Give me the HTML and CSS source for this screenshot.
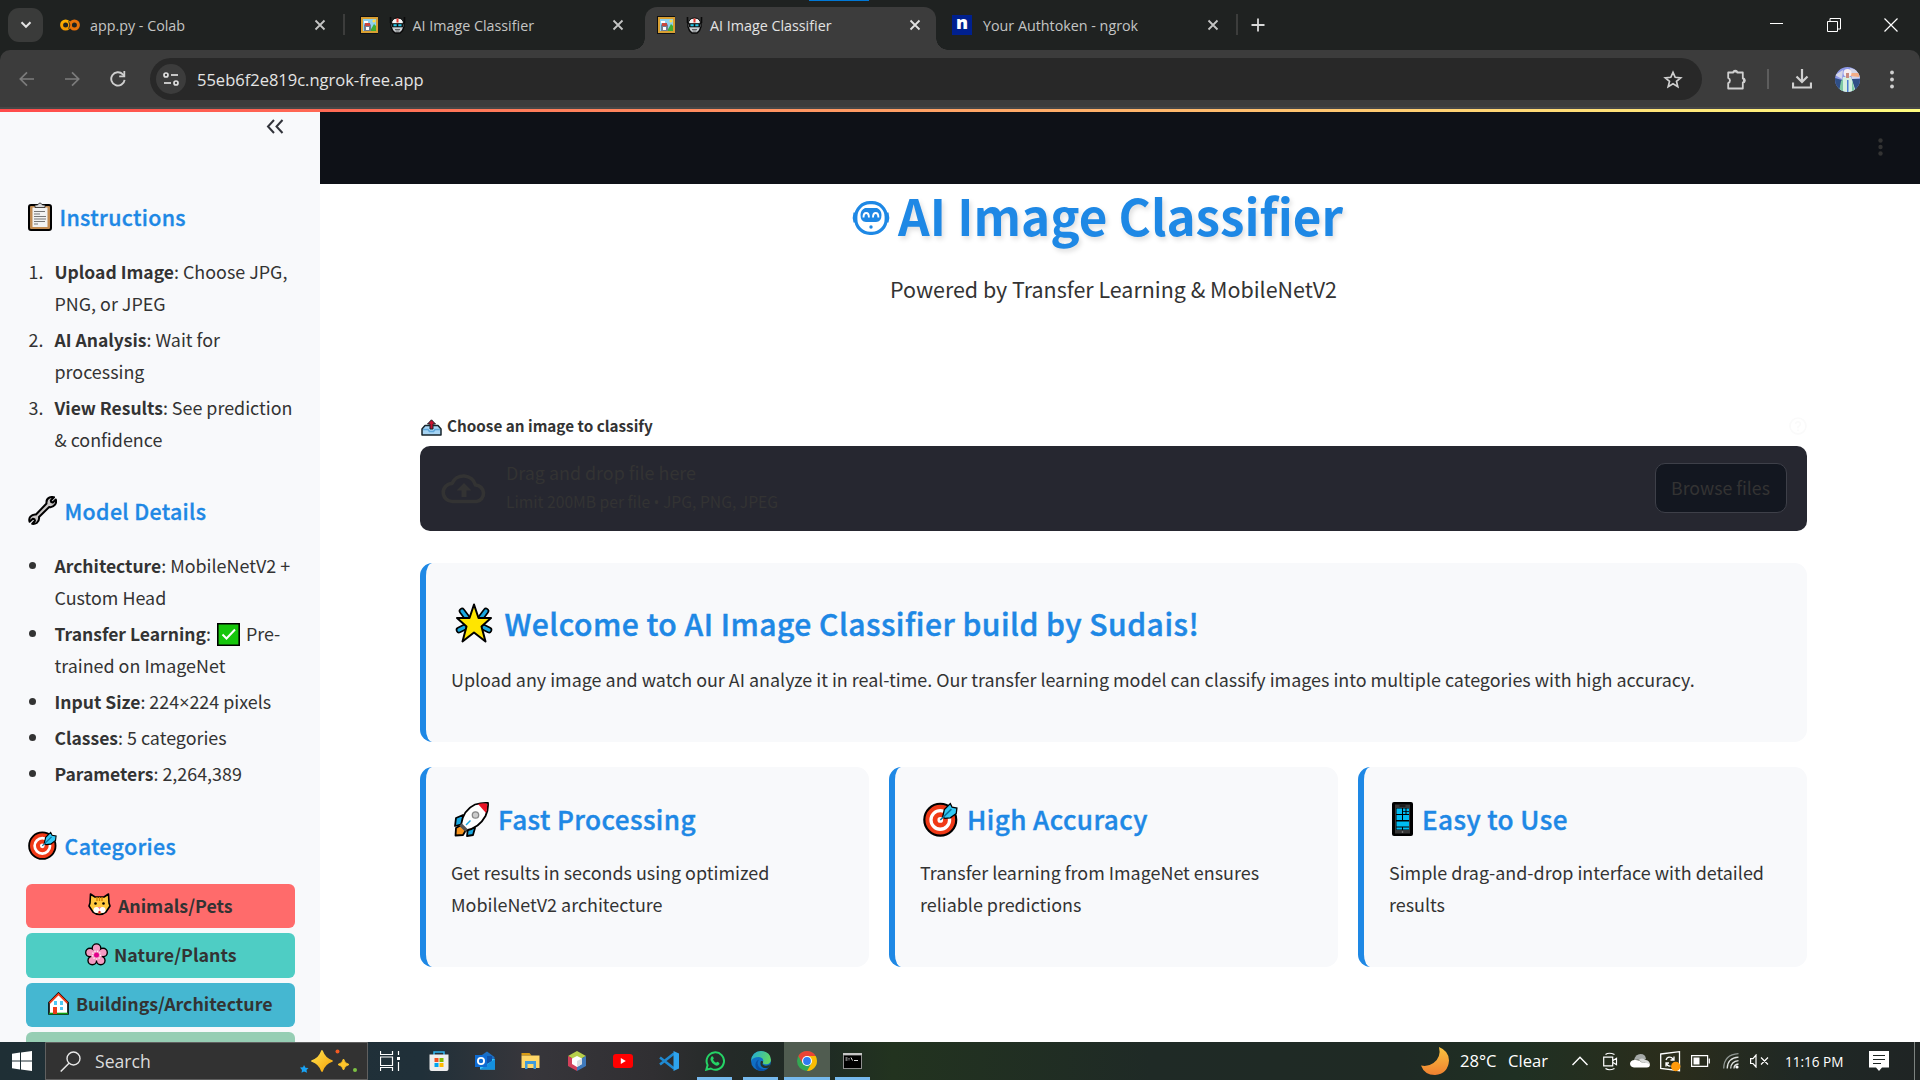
FILE: index.html
```html
<!DOCTYPE html>
<html lang="en">
<head>
<meta charset="utf-8">
<title>AI Image Classifier</title>
<link rel="stylesheet" href="styles.css">
</head>
<body>
<svg class="defs" width="0" height="0" aria-hidden="true">
  <defs>
    <linearGradient id="moonFill" x1="0" y1="0" x2="0" y2="1"><stop offset="0" stop-color="#f9c440"/><stop offset="1" stop-color="#f08030"/></linearGradient>
    <linearGradient id="sparkFill" x1="0" y1="0" x2="1" y2="1"><stop offset="0" stop-color="#ffe14d"/><stop offset="1" stop-color="#f5a30a"/></linearGradient>
    <linearGradient id="edgeTop" x1="0" y1="0" x2="1" y2="0.3"><stop offset="0" stop-color="#1fa8dc"/><stop offset="1" stop-color="#5fd668"/></linearGradient>
    <linearGradient id="colabA" x1="0" y1="0" x2="0" y2="1"><stop offset="0" stop-color="#ffb300"/><stop offset="1" stop-color="#f29900"/></linearGradient>
  </defs>
  <symbol id="close" viewBox="0 0 12 12"><path d="M1.500 1.500l9 9M10.500 1.500l-9 9" stroke="currentColor" stroke-width="1.800" fill="none"/></symbol>
  <symbol id="picture" viewBox="0 0 18 18">
    <path fill="#111" d="M0 0h18v18H0z"/><path fill="#d9a032" d="M1 1h17v16H1z"/><path fill="#8fd0ee" d="M3 3h13v12H3z"/>
    <path fill="#fff" d="M4 5h4v2H4z"/><circle cx="14" cy="5" r="1.600" fill="#ffe04a"/><path fill="#3fae35" d="M10 15l4-7 2 2v5z"/>
    <path fill="#6f7f94" d="M4 15V8l2 2h3l2-2v7z"/><path fill="#c8473f" d="M5 7h5v3H5z"/><path fill="#fff" d="M6 11h3v3H6z"/>
  </symbol>
  <symbol id="robot" viewBox="0 0 17 17">
    <path d="M1.500 0v6M15.500 0v6" stroke="#0a0a0a" stroke-width="1.600"/>
    <path d="M2 6v3.500l1.500 4L6 16h5l2.500-2.500 1.500-4V6z" fill="#c9ced2" stroke="#0a0a0a" stroke-width="1.400"/>
    <path d="M2.500 7q0-6 6-6t6 6z" fill="#f1f3f4" stroke="#0a0a0a"/><path d="M7.500 1.500h2v4h-2z" fill="#e5342b"/><path d="M3 6.300h11v4H3z" fill="#111"/>
    <path d="M4.500 7.300h3.200v2H4.500zM9.300 7.300h3.200v2H9.300z" fill="#28c7e8"/><path d="M6 12.500h5M6.500 14h4" stroke="#555" stroke-width=".9"/>
  </symbol>
  <symbol id="target" viewBox="0 0 32 32">
    <circle cx="15.800" cy="16.200" r="14.600" fill="#f03a17" stroke="#000" stroke-width="2"/>
    <circle cx="15.800" cy="16.400" r="8.500" fill="none" stroke="#fff" stroke-width="3"/>
    <circle cx="15.800" cy="16.400" r="2.600" fill="#fff"/>
    <path d="M18 13.500L19.500 7 25 1.500l1.600 3.300L31 5.500l-.6 5L25 14.500l-5 .5z" fill="#31c9f5" stroke="#000" stroke-width="1.200"/>
    <path d="M15.800 16.400L26 6.500" stroke="#0b6f9c" stroke-width="1.400"/>
  </symbol>
</svg>

<div class="window">
  <header class="tabstrip">
    <button class="tab-search"><svg width="12" height="8" viewBox="0 0 12 8"><path d="M1.500 1.200L6 5.800l4.500-4.600" fill="none" stroke="#e3e3e3" stroke-width="2"/></svg></button>
    <div class="tab">
      <svg class="favicon" width="20" height="20" viewBox="0 0 20 20"><circle cx="5.600" cy="10" r="4" fill="none" stroke="url(#colabA)" stroke-width="3"/><circle cx="14.400" cy="10" r="4" fill="none" stroke="#e8710a" stroke-width="3"/><path d="M8.600 6.200q2.600 3.800 0 7.600" fill="none" stroke="#1f2221" stroke-width=".8"/></svg>
      <span class="tab-title">app.py - Colab</span>
      <svg class="tab-close" width="12" height="12"><use href="#close"/></svg>
    </div>
    <div class="tab ruled">
      <svg class="favicon" width="18" height="18"><use href="#picture"/></svg>
      <svg class="tab-robot" width="17" height="17"><use href="#robot"/></svg>
      <span class="tab-title">AI Image Classifier</span>
      <svg class="tab-close" width="12" height="12"><use href="#close"/></svg>
    </div>
    <div class="tab active">
      <svg class="favicon" width="18" height="18"><use href="#picture"/></svg>
      <svg class="tab-robot" width="17" height="17"><use href="#robot"/></svg>
      <span class="tab-title">AI Image Classifier</span>
      <svg class="tab-close" width="12" height="12"><use href="#close"/></svg>
      <i class="load-mark"></i>
    </div>
    <div class="tab last">
      <span class="ngrok">n</span>
      <span class="tab-title">Your Authtoken - ngrok</span>
      <svg class="tab-close" width="12" height="12"><use href="#close"/></svg>
    </div>
    <svg class="new-tab" width="14" height="14" viewBox="0 0 14 14"><path d="M7 .5v13M.5 7h13" stroke="#d8d8d8" stroke-width="1.800"/></svg>
    <div class="win-controls">
      <svg width="14" height="14" viewBox="0 0 14 14"><path d="M0 5.500h13" stroke="#fff"/></svg>
      <svg width="14" height="14" viewBox="0 0 14 14"><path d="M.5 3.500h10v10H.5zM3 3V.5h10.500V11H11" fill="none" stroke="#fff"/></svg>
      <svg width="14" height="14" viewBox="0 0 14 14"><path d="M.5 .5l13 13M13.500 .5l-13 13" stroke="#fff" stroke-width="1.200"/></svg>
    </div>
  </header>

  <nav class="toolbar-wrap">
    <div class="toolbar">
      <svg width="16" height="16" viewBox="0 0 16 16"><path d="M15 8H1.500M8 1.300L1.300 8 8 14.700" fill="none" stroke="#7c7c7c" stroke-width="1.700"/></svg>
      <svg width="16" height="16" viewBox="0 0 16 16"><path d="M1 8h13.500M8 1.300L14.700 8 8 14.700" fill="none" stroke="#7c7c7c" stroke-width="1.700"/></svg>
      <svg width="16" height="16" viewBox="0 0 16 16"><path d="M14.600 8.800A6.700 6.700 0 1 1 12.800 3.300L14.500 5.200" fill="none" stroke="#cfcfcf" stroke-width="1.900"/><path d="M15.200 0v6.200H9.200V4.500h4.200V0z" fill="#cfcfcf"/></svg>
      <div class="omnibox">
        <span class="site-info"><svg width="16" height="14" viewBox="0 0 16 14"><g fill="none" stroke="#dedede" stroke-width="1.700"><circle cx="3" cy="3" r="2"/><path d="M8 3h7"/><circle cx="13" cy="11" r="2"/><path d="M1 11h7"/></g></svg></span>
        <span class="url">55eb6f2e819c.ngrok-free.app</span>
        <svg width="20" height="19" viewBox="0 0 20 19"><path d="M10 2.300l2.200 5 5.500.5-4.200 3.600 1.300 5.300-4.800-2.900-4.800 2.900 1.300-5.300L2.300 7.800l5.500-.5z" fill="none" stroke="#d0d0d0" stroke-width="1.700"/></svg>
      </div>
      <svg class="ext" width="21" height="21" viewBox="0 0 21 21"><path d="M2.200 3.500h5a2 1.900 0 0 1 4 0h5.600v6a1.900 2 0 0 1 0 4V19.500H2.200v-5.300a2.800 2.800 0 0 0 0-5.200z" fill="none" stroke="#d0d0d0" stroke-width="1.800" stroke-linejoin="round"/><path d="M7.500 3.500V2.500q1.800-1.600 3.500 0v1zM17 9.500q2.500 0 2.500 2t-2.500 2z" fill="#d0d0d0"/></svg>
      <i class="bar-rule"></i>
      <svg class="download" width="20" height="20" viewBox="0 0 20 20"><path d="M10 0v12.500M4.500 7.500l5.500 5.500 5.500-5.500M1 13.500v5h18v-5" fill="none" stroke="#d0d0d0" stroke-width="2.200"/></svg>
      <svg class="avatar" width="25" height="25" viewBox="0 0 25 25"><clipPath id="av"><circle cx="12.500" cy="12.500" r="12.500"/></clipPath><g clip-path="url(#av)"><path fill="#8d98e8" d="M0 0h25v25H0z"/><path fill="#d3d5e8" d="M15 1l10 3v7l-8 1zM0 8l8-5-1 9z"/><path fill="#2f4f86" d="M0 11l7 2 2 12H0zM17 12l8 0v10l-6 3z"/><path fill="#f3ac86" d="M15 6l10 0-1 4-9-1z"/><path fill="#d5efe0" d="M8 10l8 0 5 15H4z"/><path fill="#7cc8a3" d="M6 14l2-2 0 13H4zM17 13l3 12h-3z"/><circle cx="12.500" cy="6" r="4" fill="#f6eef2"/><path fill="#c88b80" d="M11 6h3v5h-3z"/><path fill="#4a7bd0" d="M12 13h1.500v12H12z"/></g></svg>
      <svg class="menu" width="6" height="19" viewBox="0 0 6 19"><g fill="#d0d0d0"><circle cx="3" cy="2.500" r="1.900"/><circle cx="3" cy="9.500" r="1.900"/><circle cx="3" cy="16.500" r="1.900"/></g></svg>
    </div>
  </nav>

  <div class="accent-line"></div>

  <div class="page">
    <aside class="sidebar">
      <div class="sidebar-head"><svg width="18" height="15" viewBox="0 0 18 15"><path d="M8 1L2 7.500 8 14M16.500 1l-6 6.500 6 6.500" fill="none" stroke="#31333a" stroke-width="2"/></svg></div>
      <section class="block">
        <h3>
          <svg width="24" height="29" viewBox="0 0 24 29"><rect x="1" y="3" width="22" height="25" rx="2" fill="#c18b52" stroke="#000" stroke-width="2"/><path fill="#f2f2f2" d="M4.500 5.500h15V25h-15z"/><path fill="#d9d9d9" stroke="#222" stroke-width=".8" d="M7 5.500V3h2.500q2.500-4 5 0H17v2.500z"/><path d="M6 9.500h11M6 12h6M6 14.500h12M6 17h12M6 19.500h11M6 22h4" stroke="#777" stroke-width="1.100"/></svg>
          <span>Instructions</span>
        </h3>
        <ol>
          <li><b>Upload Image</b>: Choose JPG,<br>PNG, or JPEG</li>
          <li><b>AI Analysis</b>: Wait for<br>processing</li>
          <li><b>View Results</b>: See prediction<br>&amp; confidence</li>
        </ol>
      </section>
      <section class="block">
        <h3>
          <svg width="29" height="29" viewBox="0 0 29 29"><path d="M18.500 7.500Q18 3 21.500 1.500q2.500-1 4.500-.2L22.800 4.500l.4 1.500 1.600.5 3-3q1 2.500-.8 5.200-2.300 3-5.800 2.300L11 21q.6 3.800-2.300 6-2.300 1.300-4.500.8L7 24.800l-.5-1.500-1.700-.5-3.200 3q-1-3 .8-5.200Q4.600 18 8 18.500z" fill="#c9c6c5" stroke="#000" stroke-width="2" stroke-linejoin="round"/></svg>
          <span>Model Details</span>
        </h3>
        <ul>
          <li><b>Architecture</b>: MobileNetV2 +<br>Custom Head</li>
          <li><b>Transfer Learning</b>: <svg class="check" width="23" height="23" viewBox="0 0 23 23"><path fill="#16c60c" stroke="#000" stroke-width="1.600" d="M.8 .8h21.400v21.400H.8z"/><path d="M5.500 11.500l4 4 8.500-9" fill="none" stroke="#fff" stroke-width="2"/></svg> Pre-<br>trained on ImageNet</li>
          <li><b>Input Size</b>: 224<span class="sym">×</span>224 pixels</li>
          <li><b>Classes</b>: 5 categories</li>
          <li><b>Parameters</b>: 2,264,389</li>
        </ul>
      </section>
      <section class="block">
        <h3><svg width="29" height="29"><use href="#target"/></svg><span>Categories</span></h3>
        <div class="pill animals">
          <svg width="23" height="23" viewBox="0 0 23 23"><path d="M2.500 1L7 4h9l4.500-3 .5 9 1 3-4 6q-6.500 5-13 0l-4-6 1-3z" fill="#ffc83d" stroke="#000" stroke-width="1.600" stroke-linejoin="round"/><path d="M9 4v4M11.500 4v4M14 4v4" stroke="#d67d00" stroke-width="1.300"/><circle cx="8.500" cy="17" r="3" fill="#fff"/><circle cx="14.500" cy="17" r="3" fill="#fff"/><circle cx="7.500" cy="10.500" r="1.300"/><circle cx="15.500" cy="10.500" r="1.300"/><path d="M10 14h3l-1.500 2z" fill="#f7a"/><path d="M10.500 18h2v2.500h-2z" fill="#e81224"/></svg>
          Animals/Pets
        </div>
        <div class="pill nature">
          <svg width="23" height="23" viewBox="0 0 23 23"><g fill="#f59bc4" stroke="#000" stroke-width="2.600"><circle cx="11.500" cy="5.200" r="3.700"/><circle cx="18" cy="9.500" r="3.700"/><circle cx="15.700" cy="17.500" r="3.700"/><circle cx="7.300" cy="17.500" r="3.700"/><circle cx="5" cy="9.500" r="3.700"/></g><g fill="#f59bc4"><circle cx="11.500" cy="5.200" r="3.600"/><circle cx="18" cy="9.500" r="3.600"/><circle cx="15.700" cy="17.500" r="3.600"/><circle cx="7.300" cy="17.500" r="3.600"/><circle cx="5" cy="9.500" r="3.600"/><circle cx="11.500" cy="12" r="5.500"/></g><circle cx="11.500" cy="12" r="4" fill="none" stroke="#fff" stroke-dasharray="1.200 1.500" stroke-width="1.200"/><circle cx="11.500" cy="12" r="2.500" fill="#e3008c"/></svg>
          Nature/Plants
        </div>
        <div class="pill buildings">
          <svg width="21" height="23" viewBox="0 0 21 23"><path d="M1 22V10.500L10.500 1 20 10.500V22z" fill="#fff" stroke="#000" stroke-width="1.600"/><path d="M1.500 11L10.500 2l9 9" fill="none" stroke="#f03a17" stroke-width="1.800"/><path d="M1 21.500h19" stroke="#13a10e" stroke-width="1.600"/><path fill="#f03a17" d="M5 15h4v7H5z"/><path fill="#50c8f5" d="M6 9h3v4H6zM12 9h3v4h-3zM12 15h3v3h-3z"/></svg>
          Buildings/Architecture
        </div>
        <div class="pill more"></div>
      </section>
    </aside>

    <main class="main">
      <div class="app-header"><svg width="5" height="18" viewBox="0 0 5 18"><g fill="#333"><circle cx="2.500" cy="2.500" r="2.200"/><circle cx="2.500" cy="9" r="2.200"/><circle cx="2.500" cy="15.500" r="2.200"/></g></svg></div>
      <div class="content">
        <h1>
          <svg width="38" height="34" viewBox="0 0 38 34"><rect x="3.800" y="1.700" width="30.400" height="30.600" rx="14" fill="none" stroke="#1e88e5" stroke-width="3.200"/><path fill="#1e88e5" d="M1.500 11.500h2.500v10H1.500q-1.500-5 0-10zM36.500 11.500H34v10h2.500q1.500-5 0-10zM13 7h12q4.500 2 4.500 7 0 7-5.500 7H14q-5.500 0-5.500-7 0-5 4.500-7z"/><path d="M11.500 16.500q0-4.500 2.700-4.500t2.700 4.500M21 16.500q0-4.500 2.700-4.500t2.700 4.500" fill="none" stroke="#fff" stroke-width="1.900"/><circle cx="19" cy="26" r="1.700" fill="#1e88e5"/></svg>
          <span>AI Image Classifier</span>
        </h1>
        <p class="subtitle">Powered by Transfer Learning &amp; MobileNetV2</p>
        <div class="field-label">
          <svg width="21" height="17" viewBox="0 0 21 17"><path d="M1 10l3-3.500h13l3 3.500v6H1z" fill="#a7d4f3" stroke="#17242c" stroke-width="1.500" stroke-linejoin="round"/><path d="M2 10.500h5l1.500 2h4l1.500-2h5" fill="none" stroke="#5fa8dc" stroke-width="1.500"/><path d="M10.500 .8L6.500 5H9v5h3V5h2.500z" fill="#c8102e" stroke="#17242c" stroke-width="1"/></svg>
          <span>Choose an image to classify</span>
          <svg class="help" width="18" height="18" viewBox="0 0 18 18"><circle cx="9" cy="9" r="8" fill="none" stroke="#fafafa" stroke-width="1.600"/><path d="M6.500 7q.3-2.300 2.500-2.300T11.500 7Q11.500 8.500 9 9.800v1.400M9 12.500v1.500" fill="none" stroke="#fafafa" stroke-width="1.500"/></svg>
        </div>
        <div class="dropzone">
          <svg width="46" height="31" viewBox="0 0 46 31"><path d="M11.500 28.500a9 9 0 0 1-.5-18A12.500 12.500 0 0 1 34.500 12a8.300 8.300 0 0 1 1 16.500z" fill="none" stroke="#333" stroke-width="3.600" stroke-linejoin="round"/><path d="M23 10l-7.500 7.500h5V24h5v-6.500h5z" fill="#333"/></svg>
          <div class="drop-text"><p>Drag and drop file here</p><small>Limit 200MB per file <span class="sym">•</span> JPG, PNG, JPEG</small></div>
          <button class="browse">Browse files</button>
        </div>
        <section class="card welcome">
          <h2>
            <svg width="40" height="40" viewBox="0 0 40 40"><path d="M8 8l6 8M32 8l-6 8M5 27l8-4M35 27l-8-4" stroke="#000" stroke-width="6.500" stroke-linecap="round"/><path d="M8 8l6 8M32 8l-6 8M5 27l8-4M35 27l-8-4" stroke="#19a8e0" stroke-width="3.200" stroke-linecap="round"/><path d="M20 1.500l4.500 13.500H37l-9.500 8.500L31.500 38.500 20 29.500 8.500 38.500l4-15L3 15h12.500z" fill="#ffe500" stroke="#000" stroke-width="2" stroke-linejoin="round"/></svg>
            <span>Welcome to AI Image Classifier build by Sudais!</span>
          </h2>
          <p>Upload any image and watch our AI analyze it in real-time. Our transfer learning model can classify images into multiple categories with high accuracy.</p>
        </section>
        <div class="features">
          <section class="card">
            <h3>
              <svg width="35" height="35" viewBox="0 0 35 35"><path d="M9 13l-7 3-1 8 8-2zM21 26l-2 7-6 1 1-8z" fill="#19a8e0" stroke="#000" stroke-width="1.800" stroke-linejoin="round"/><path d="M1.500 33.500L2 26l5-3 5 5-3 5z" fill="#f7941e" stroke="#000" stroke-width="1.800" stroke-linejoin="round"/><path d="M7 23Q9 8 21 2.500 28 .5 34 1 34.500 8 31.500 14 25 26 12 28.500z" fill="#fff" stroke="#000" stroke-width="1.800" stroke-linejoin="round"/><path d="M24 2q5-1.200 9.200-.2.300 5-1.200 9.200z" fill="#e81224"/><path d="M6.500 22.500l6 6" stroke="#555" stroke-width="3.500"/><circle cx="21.500" cy="13" r="3.200" fill="#ccc" stroke="#888" stroke-width="1.300"/><path d="M12 23l4.500-4.500" stroke="#19a8e0" stroke-width="1.500"/></svg>
              <span>Fast Processing</span>
            </h3>
            <p>Get results in seconds using optimized<br>MobileNetV2 architecture</p>
          </section>
          <section class="card">
            <h3><svg width="35" height="35"><use href="#target"/></svg><span>High Accuracy</span></h3>
            <p>Transfer learning from ImageNet ensures<br>reliable predictions</p>
          </section>
          <section class="card">
            <h3>
              <svg width="21" height="34" viewBox="0 0 21 34"><rect width="21" height="34" rx="2"/><path fill="#383838" d="M3 2.500h15v29H3z"/><path fill="#000" d="M4 6h13v22H4zM7.500 3.500h6v1h-6z"/><path fill="#00bcf2" d="M4.500 6.500H10v5.500H4.500zM11 6.500h2.500V9H11zM14.500 6.500H17V9h-2.500zM11 9.800h2.500v2.200H11zM14.500 9.800H17v2.200h-2.500zM4.500 13H10v5H4.500zM11 13h6v5h-6zM4.500 19.500H17v5H4.500zM4.500 25.500H10v2H4.500zM11 25.500h6v2h-6z"/><circle cx="10.500" cy="30" r=".8" fill="#999"/></svg>
              <span>Easy to Use</span>
            </h3>
            <p>Simple drag-and-drop interface with detailed<br>results</p>
          </section>
        </div>
      </div>
    </main>
  </div>

  <footer class="taskbar">
    <div class="start"><svg width="20" height="20" viewBox="0 0 20 20"><path fill="#fff" d="M0 2.800L8 1.600v7.900H0zM9 1.500L20 0v9.500H9zM0 10.500h8v7.900l-8-1.200zM9 10.500h11V20L9 18.500z"/></svg></div>
    <div class="search">
      <svg width="21" height="21" viewBox="0 0 21 21"><circle cx="13.500" cy="7.500" r="6.500" fill="none" stroke="#e8e8e8" stroke-width="1.400"/><path d="M9 12.200L.7 20.500" stroke="#e8e8e8" stroke-width="1.500"/></svg>
      <span>Search</span>
      <svg class="sparkles" width="58" height="24" viewBox="0 0 58 24"><path d="M22 2q2.500 7.500 10 10-7.500 2.500-10 10-2.500-7.500-10-10 7.500-2.500 10-10z" fill="url(#sparkFill)" stroke="url(#sparkFill)" stroke-width="1.800" stroke-linejoin="round"/><path d="M43.500 10q1 4.500 5.500 5.500-4.500 1-5.500 5.500-1-4.500-5.500-5.500 4.500-1 5.500-5.500z" fill="#ffc52a" stroke="#ffc52a"/><path d="M4 16l1.500 2.700L8.500 19l-2 2 .5 2.800-3-1.300-2.500 1.200.5-2.700-2-2.500 3-.2z" fill="#19a3f5"/><circle cx="37.500" cy="2.500" r="2" fill="#f25a22"/><circle cx="55" cy="21" r="2" fill="#7cc243"/></svg>
    </div>
    <div class="app taskview"><svg width="20" height="20" viewBox="0 0 20 20"><path d="M.5 0v3.500h12V0M.5 20v-3.500h12V20M.5 6h12v8.500H.5zM18.500 0v4M18.500 11v9" fill="none" stroke="#fff" stroke-width="1.200"/><path fill="#fff" d="M17 6h3v3h-3z"/></svg></div>
    <div class="app"><svg width="20" height="20" viewBox="0 0 20 20"><path d="M5 4V1h10v3" fill="none" stroke="#31b4f0" stroke-width="1.500"/><path fill="#eee" d="M.5 3.500h19V18q0 2-2 2h-15q-2 0-2-2z"/><path fill="#f25022" d="M5.500 7h4v4h-4z"/><path fill="#7fba00" d="M10.500 7h4v4h-4z"/><path fill="#00a4ef" d="M5.500 12h4v4h-4z"/><path fill="#ffb900" d="M10.500 12h4v4h-4z"/></svg></div>
    <div class="app"><svg width="20" height="20" viewBox="0 0 20 20"><path fill="#1b6fc4" d="M4 6l8-5.500L19.500 6v4H4z"/><path fill="#38c4f5" d="M5 8h15v10.500H5z"/><path fill="#1490df" d="M5 18.500L20 8v10.500z"/><path fill="#0f52a8" d="M7 5h10v5l-5 3-5-3z"/><path fill="#0f6cd3" d="M0 4h12v12H0z"/><circle cx="6" cy="10" r="3.100" fill="none" stroke="#fff" stroke-width="1.800"/></svg></div>
    <div class="app"><svg width="19" height="18" viewBox="0 0 19 18"><path fill="#d99b14" d="M.5 1h8l2 2.500H.5z"/><path fill="#ffd767" d="M.5 3.500h18V16H.5z"/><path fill="#3d9bdc" d="M4 9h11v8h-2.500v-5h-6v5H4z"/></svg></div>
    <div class="app"><svg width="18" height="20" viewBox="0 0 18 20"><path fill="#b7cf4b" d="M0 5l9-5 9 5-9 5z"/><path fill="#d2405a" d="M0 5l9 5v10l-9-5z"/><path fill="#3f79bb" d="M18 5l-9 5v10l9-5z"/><path fill="#fff" d="M4 7.500l5-2.500 5 2.500v5.500l-5 3-5-3z"/><path fill="#d8dde0" d="M9 10l5-2.500v5.500l-5 3z"/></svg></div>
    <div class="app"><svg width="20" height="14" viewBox="0 0 20 14"><rect width="20" height="14" rx="3" fill="#f00"/><path fill="#fff" d="M7.800 4l5 3-5 3z"/></svg></div>
    <div class="app"><svg width="20" height="20" viewBox="0 0 20 20"><path d="M1 6.500L15 17.500M1 13.500L15 2.500" stroke="#1f8ad2" stroke-width="2.600"/><path fill="#2ea4ee" d="M14.500 0L20 2.500v15L14.500 20z"/></svg></div>
    <div class="app open"><svg width="20" height="20" viewBox="0 0 20 20"><path d="M1.300 18.700l1.300-4.600A8.700 8.700 0 1 1 5.800 17.500z" fill="none" stroke="#25d366" stroke-width="2"/><path d="M6.500 5.500q1.500-1 2.300 2l-.8 1.300q1 2 3 3l1.300-1q2.800 1 2 2.500-1.500 2-4 1Q6.500 12.500 5.500 9q-.2-2.500 1-3.500z" fill="#25d366"/></svg></div>
    <div class="app open"><svg width="20" height="20" viewBox="0 0 20 20"><circle cx="10" cy="10" r="10" fill="#0f6fc6"/><path d="M0 10Q1 .3 10 0q9.500.5 10 9-.5 4-4.500 4.300-4 0-3.500-1.800Q13.500 7 8 6 2 6 0 10z" fill="url(#edgeTop)"/><path d="M8 8.500Q4.500 13 9 17q4 2.500 8.500-.5Q14 21 8.500 19.900 4 18 4.500 13 5 9.500 8 8.500z" fill="#0a4fa3"/><path d="M12 11.500q-1.500 2 1.500 3 3.500.7 6-1.500l-1.800 3.500q-4 1.500-7-.8Q8.500 13 10 10q2.300-.5 2 1.500z" fill="#26332b"/></svg></div>
    <div class="app open current"><svg width="20" height="20" viewBox="0 0 20 20"><circle cx="10" cy="10" r="10" fill="#34a853"/><path fill="#ea4335" d="M1.340 5A10 10 0 0 1 18.660 5H10L5.670 12.500z"/><path fill="#fbbc04" d="M18.660 5A10 10 0 0 1 10 20l4.330-7.500L10 5z"/><circle cx="10" cy="10" r="5" fill="#fff"/><circle cx="10" cy="10" r="3.900" fill="#2f7bf0"/></svg></div>
    <div class="app open"><svg width="19" height="16" viewBox="0 0 19 16"><path fill="#8f8f8f" d="M0 0h19v16H0z"/><path fill="#c6c6c6" d="M0 0h19v2H0z"/><path d="M1 2.500h17V15H1z"/><path d="M2.500 5h2M2.500 7h2M6 5v.8M6 6.500v.8M8 4.500l1.500 3M11 7.500h4" stroke="#ddd" stroke-width="1"/></svg></div>

    <div class="tray">
      <svg class="moon" width="28" height="28" viewBox="0 0 28 28"><path fill="url(#moonFill)" d="M18 0q10 4 10 13.500-1 13.500-14 14.500Q3.500 28 0 18.500q7 1.500 12.500-2.500Q20.500 10 18 0z"/></svg>
      <span class="temp">28°C</span><span class="sky">Clear</span>
      <svg class="chev" width="16" height="10" viewBox="0 0 16 10"><path d="M.5 9L8 1.300 15.500 9" fill="none" stroke="#fff" stroke-width="1.400"/></svg>
      <svg class="cam" width="15" height="19" viewBox="0 0 15 19"><path d="M.7 5.200h9v8.600h-9zM10 8.500L13.500 6.300v6.400L10 10.500M2.500 2.500q3.500-2.500 9 0M2.500 16.500q3.500 2.500 9 0" fill="none" stroke="#fff" stroke-width="1.200"/></svg>
      <svg class="drive" width="20" height="14" viewBox="0 0 20 14"><path fill="#a5a9a7" d="M4 6Q5.500 0 10.500 0T16 5z"/><path fill="#fff" d="M4 13.500Q0 13 0 9.500 .5 6 4.500 6q5-.5 8 3 7-1.500 7.500 2-.3 2.500-3 2.500z"/><path fill="#d8dad9" d="M8 6q4-3 8 0 3.500.5 4 4.500-4-2.500-7.500-1.500Q10.500 6.500 8 6z"/></svg>
      <svg class="update" width="21" height="21" viewBox="0 0 21 21"><path d="M.7 3L19.500.7v19L.7 17.500z" fill="none" stroke="#fff" stroke-width="1.300"/><path d="M6 9q1.500-4 5.500-2.500L14 9M14 5.500V9h-3.500M6 15.500V12h3M6.500 12.500q1 3 4 2.500" fill="none" stroke="#fff" stroke-width="1.300"/><circle cx="15.700" cy="15.500" r="4.700" fill="#ff9a0a"/></svg>
      <svg class="batt" width="19" height="12" viewBox="0 0 19 12"><path d="M.6 .6h16v10.800h-16zM18.300 3.500v5" fill="none" stroke="#fff" stroke-width="1.200"/><path fill="#fff" d="M2.500 2.500h6v7h-6z"/></svg>
      <svg class="wifi" width="16" height="16" viewBox="0 0 16 16"><g fill="none" stroke-width="1.300"><path d="M.7 15.500Q1 1.500 15.500.7" stroke="#8f9692"/><path d="M4.200 15.500Q4.500 5 15.500 4.200M7.700 15.500Q8 8.500 15.500 7.700M11 15.500q0-4 4.500-4.500" stroke="#dfe2e0"/></g><circle cx="14" cy="14" r="1.600" fill="#fff"/></svg>
      <svg class="vol" width="19" height="14" viewBox="0 0 19 14"><path d="M.6 4.600H3L6 1v12L3 9.500H.6zM11 3.500l7 7M18 3.500l-7 7" fill="none" stroke="#fff" stroke-width="1.200"/></svg>
      <span class="clock">11:16 PM</span>
      <svg class="note" width="20" height="20" viewBox="0 0 20 20"><path fill="#fff" d="M0 0h20v16.500h-7L10 20l-3-3.500H0z"/><path d="M4 4.500h12M4 8.500h12M4 12.500h8" stroke="#1d2523" stroke-width="1.100"/></svg>
      <i class="peek"></i>
    </div>
  </footer>
</div>
</body>
</html>
```
FILE: styles.css
```css
* { box-sizing: border-box; }
body, h1, h2, h3, p, ol, ul { margin: 0; padding: 0; }
svg { display: block; flex: none; }
.defs { position: absolute; }
button { border: 0; padding: 0; font: inherit; }

.window {
  width: 1920px;
  height: 1080px;
  display: flex;
  flex-direction: column;
  overflow: hidden;
  background: #fff;
  font-family: "Noto Sans CJK SC", "Noto Sans", sans-serif;
  color: #333;
}

/* browser tabs */
.tabstrip {
  height: 50px;
  flex: none;
  display: flex;
  background: #1f2221;
  font-family: "Open Sans", sans-serif;
  font-size: 14.3px;
  color: #c4c5c4;
}
.tab-search {
  width: 35px;
  height: 34px;
  margin: 8px 4.5px 0 8px;
  border-radius: 11px;
  background: #3a3b3a;
  display: flex;
  align-items: center;
  justify-content: center;
}
.tab {
  width: 297.5px;
  height: 50px;
  padding: 0 19px 0 12.5px;
  display: flex;
  align-items: center;
  position: relative;
}
.tab:nth-of-type(n+2) { padding-left: 14.5px; }
.tab .tab-title { flex: 1; line-height: 50px; white-space: nowrap; margin-left: 10px; padding-top: 1px; }
.tab-robot { margin-left: 11px; }
.tab-robot + .tab-title { margin-left: 7px; }
.ruled::before, .last::after {
  content: "";
  position: absolute;
  top: 14px;
  left: -2px;
  width: 2px;
  height: 21px;
  background: #3c3d3c;
}
.last::after { left: auto; right: 0; }
.active { color: #e3e3e3; }
.active::before {
  content: "";
  position: absolute;
  z-index: 0;
  inset: 7px 4px 0 2.5px;
  border-radius: 12px 12px 0 0;
  background: #3c3c3c;
}
.active::after {
  content: "";
  position: absolute;
  bottom: 0;
  left: -9.5px;
  right: -8px;
  height: 12px;
  background:
    radial-gradient(circle at 0 0, transparent 11.5px, #3c3c3c 12px) left / 12px 12px no-repeat,
    radial-gradient(circle at 100% 0, transparent 11.5px, #3c3c3c 12px) right / 12px 12px no-repeat;
}
.active > svg, .active > span { position: relative; z-index: 1; }
.load-mark { position: absolute; left: 166px; top: 0; width: 60px; height: 1px; background: #0078d7; }
.ngrok {
  width: 20px;
  height: 20px;
  margin-left: -2.5px;
  background: #00208f;
  color: #fff;
  font: 800 18px/15px "Open Sans", sans-serif;
  text-align: center;
}
.ngrok + .tab-title { margin-left: 11px; }
.new-tab { margin: 18px 0 0 13px; }
.win-controls { margin: 18px 22px 0 auto; display: flex; gap: 43px; }

/* toolbar */
.toolbar-wrap { height: 59px; flex: none; background: #1f2221; }
.toolbar {
  height: 59px;
  padding: 1px 23px 0 19px;
  border-radius: 10px 10px 0 0;
  border-bottom: 2px solid #474747;
  background: #3c3c3c;
  display: flex;
  align-items: center;
}
.toolbar > svg:nth-child(2) { margin-left: 29px; }
.toolbar > svg:nth-child(3) { margin-left: 30px; }
.omnibox {
  width: 1552px;
  height: 42px;
  margin-left: 24px;
  padding: 0 19px 0 6px;
  border-radius: 21px;
  background: #282828;
  display: flex;
  align-items: center;
}
.site-info {
  width: 30px;
  height: 30px;
  border-radius: 50%;
  background: #3c3c3c;
  display: flex;
  align-items: center;
  justify-content: center;
}
.url { flex: 1; margin-left: 11px; padding-top: 1px; font: 16.5px/42px "Open Sans", sans-serif; color: #e4e4e4; }
.toolbar .ext { margin-left: 24px; }
.bar-rule { width: 2px; height: 20px; margin-left: 20px; background: #5d5d5d; }
.toolbar .download { margin-left: 23px; }
.avatar { margin-left: 23px; }
.toolbar .menu { margin-left: 29px; }

.accent-line { height: 3px; flex: none; background: linear-gradient(90deg, #ff4b4b, #fffd80); }

/* page */
.page { height: 930px; flex: none; display: flex; overflow: hidden; }
.sidebar {
  width: 320px;
  flex: none;
  padding: 0 25px 0 26px;
  background: #f8f9fb;
  font-size: 17.9px;
  line-height: 32px;
}
.sidebar-head { height: 89px; padding: 7px 11px 0 0; display: flex; justify-content: flex-end; }
.block { margin-bottom: 40.5px; }
.block h3 {
  height: 30px;
  margin: 0 0 24px 2px;
  display: flex;
  align-items: center;
  gap: 7.5px;
  font-size: 21.4px;
  line-height: 30px;
  color: #1e88e5;
}
.block h3 span { padding-top: 1px; }
.block h3, .card h2, .card h3 {
  font-weight: 500;
  letter-spacing: .0155em;
  -webkit-text-stroke: .016em #1e88e5;
}
ol { padding-left: 21.5px; }
ol li { padding-left: 7px; }
ul { margin-top: -1px; padding: 0 0 1px 23.5px; }
ul li { padding-left: 5px; }
li { white-space: nowrap; }
li + li { margin-top: 4px; }
li b { font-size: 17.5px; font-weight: 700; line-height: 0; }
.sym { font-family: "Open Sans", sans-serif; line-height: 0; }
.check { display: inline-block; vertical-align: -5px; margin: -3px 2px 0; }
.pill {
  height: 44.4px;
  margin-bottom: 5px;
  border-radius: 6px;
  display: flex;
  align-items: center;
  justify-content: center;
  gap: 6.5px;
  padding-bottom: 3px;
  font-weight: 700;
  font-size: 17.8px;
}
.animals { background: #ff6b6b; }
.nature { background: #4ecdc4; }
.buildings { background: #45b7d1; }
.more { background: #96ceb4; }

.main { flex: 1; display: flex; flex-direction: column; }
.app-header { height: 72px; flex: none; padding: 0 37px 2px 0; background: #0e1117; display: flex; align-items: center; justify-content: flex-end; }
.content { padding: 0 113px 0 100px; }
h1 {
  height: 60px;
  padding-right: 32px;
  display: flex;
  align-items: center;
  justify-content: center;
  gap: 8px;
  font-size: 49.35px;
  line-height: 60px;
  color: #1e88e5;
  text-shadow: 2px 3px 5px rgba(0, 0, 0, .13);
}
h1 svg { margin-top: 7px; }
h1 span { padding-top: 2px; }
.subtitle { margin-top: 28px; font-size: 21.44px; line-height: 34px; text-align: center; }
.field-label {
  height: 24px;
  margin-top: 107px;
  padding-left: 1px;
  display: flex;
  align-items: center;
  gap: 5px;
  font-size: 15.28px;
  line-height: 24px;
  font-weight: 700;
}
.field-label svg { margin-top: 5px; }
.field-label .help { margin: 2px 0 0 auto; }
.dropzone {
  height: 85px;
  margin-top: 9px;
  padding: 0 20.5px 1px 20.5px;
  border-radius: 10px;
  background: #262730;
  display: flex;
  align-items: center;
}
.drop-text { flex: 1; margin-left: 19.5px; font-size: 17.9px; line-height: 32px; }
.drop-text small { display: block; font-size: 15.66px; line-height: 28px; }
.drop-text p { margin-top: -5px; }
.browse {
  width: 132px;
  height: 50px;
  border: 1px solid #3e4049;
  border-radius: 10px;
  background: #131720;
  color: #333;
  font-size: 17.7px;
  line-height: 44px;
  padding-bottom: 3px;
}
.card {
  padding: 34px 25px 0;
  border-left: 6px solid #1e88e5;
  border-radius: 12.5px;
  background: #f8f9fb;
  font-size: 17.91px;
  line-height: 32px;
  white-space: nowrap;
}
.card h2, .card h3 { display: flex; align-items: center; gap: 9px; color: #1e88e5; }
.card h3 { height: 36px; margin: 0 0 19px 3px; font-size: 26.12px; line-height: 36px; }
.welcome { height: 179px; margin-top: 32px; padding-top: 40px; }
.card h2 { height: 40px; margin: 0 0 20px 3px; gap: 10.5px; font-size: 30.07px; line-height: 40px; }
.features { height: 200px; margin-top: 25px; display: grid; grid-template-columns: repeat(3, 1fr); gap: 20px; }

/* taskbar */
.taskbar {
  height: 38px;
  flex: none;
  display: flex;
  align-items: center;
  background: linear-gradient(90deg, #1f2f35 0, #203039 22%, #37363b 27.500%, #302f32 34%, #242a28 38%, #1f2b24 43%, #22331f 46.500%, #1f2a26 60%, #1f2a24 73%, #1f3023 79%, #2b2d1b 87%, #1f2825 94%, #1f2424 100%);
  color: #fff;
  font-family: "Open Sans", sans-serif;
}
.start { width: 45px; padding-left: 12px; }
.search {
  width: 323px;
  height: 38px;
  padding: 0 9px 0 14px;
  border: 1px solid #606060;
  background: #323232;
  display: flex;
  align-items: center;
  font-size: 17.6px;
  color: #dcdcdc;
}
.search span { flex: 1; margin-left: 14px; line-height: 36px; }
.app { width: 46px; height: 38px; display: flex; align-items: center; justify-content: center; }
.taskview { margin-right: 1.5px; padding-right: 2px; }
.open { background: linear-gradient(#76b9ed, #76b9ed) center bottom / 35px 3px no-repeat; }
.current { background: linear-gradient(#76b9ed, #76b9ed) center bottom / 46px 3px no-repeat #505c50; }
.tray { margin-left: auto; height: 38px; display: flex; align-items: center; white-space: nowrap; }
.temp, .sky { font-size: 16.6px; line-height: 38px; }
.temp { width: 37px; margin-left: 11px; }
.sky { width: 40px; margin-left: 11px; }
.chev { margin-left: 24px; }
.cam { margin-left: 15px; }
.drive { margin-left: 12px; }
.update { margin-left: 10px; }
.batt { margin-left: 10px; }
.wifi { margin-left: 13px; }
.vol { margin-left: 11px; }
.clock { width: 58px; margin-left: 16px; font-size: 13.57px; }
.note { margin-left: 26px; }
.peek { width: 1px; height: 38px; margin: 0 5px 0 25px; background: #7c8280; }
```
